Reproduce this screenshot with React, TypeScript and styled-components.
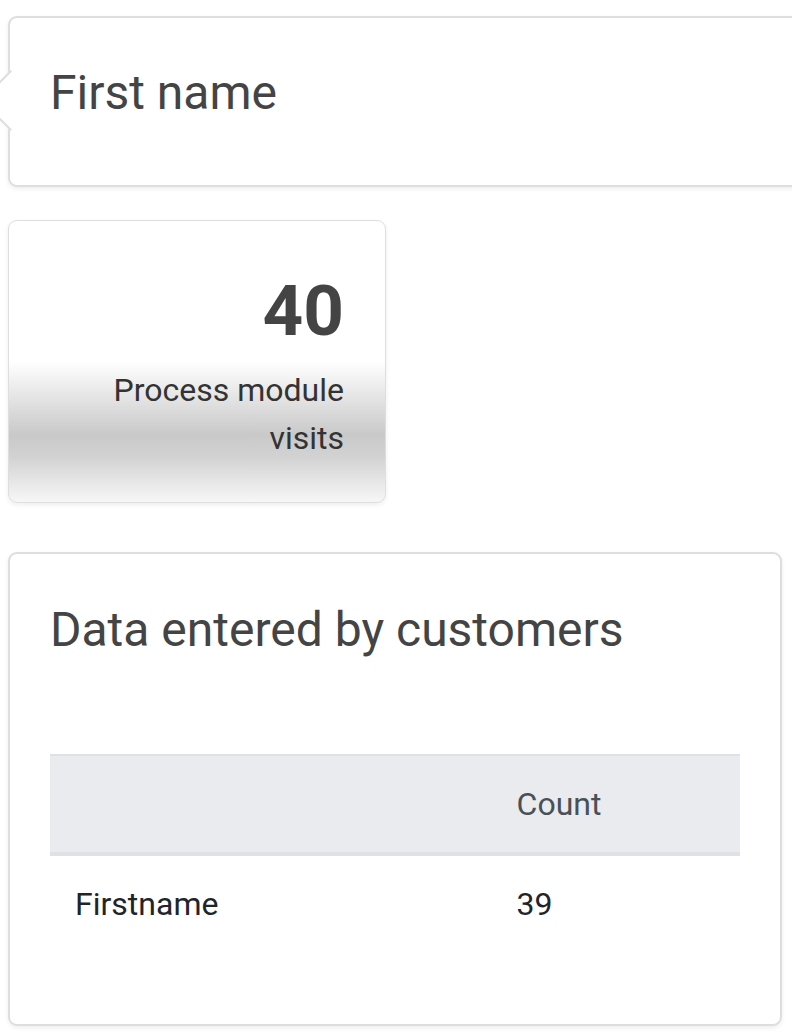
import React from "react";
import styled, { createGlobalStyle } from "styled-components";

const Global = createGlobalStyle`
  html, body { margin: 0; padding: 0; overflow-x: hidden; background: #fff; }
  body { font-family: Roboto, "Noto Sans", "Liberation Sans", sans-serif; color: #444; }
  * { box-sizing: border-box; }
`;

const Page = styled.div`
  display: flex;
  flex-direction: column;
  align-items: flex-start;
  padding: 16px 10px 10px 8px;
`;

const Card = styled.div`
  position: relative;
  background: #fff;
  border: 2px solid #dedede;
  border-radius: 9px;
  box-shadow: 0 2px 5px rgba(0, 0, 0, 0.07);
`;

const LabelCard = styled(Card)`
  align-self: stretch;
  margin-right: -40px;
  padding: 47px 40px 64px;

  &::before {
    content: "";
    position: absolute;
    left: -21.5px;
    top: 60.5px;
    width: 41px;
    height: 41px;
    background: #fff;
    border-left: 2px solid #dedede;
    border-bottom: 2px solid #dedede;
    transform: rotate(45deg);
  }
`;

const LabelText = styled.div`
  position: relative;
  font-size: 48px;
  line-height: 56px;
  color: #444;
`;

const StatCard = styled(Card)`
  margin-top: 33px;
  width: 378px;
  height: 283px;
  border-width: 1.5px;
  padding: 50px 41px 0;
  text-align: right;
  background: linear-gradient(
    to bottom,
    #ffffff 0%,
    #ffffff 50%,
    #c9c9c9 76%,
    #d2d2d2 84%,
    #f7f7f7 100%
  );
`;

const StatValue = styled.div`
  font-size: 71px;
  font-weight: 700;
  line-height: 80px;
  color: #444;
`;

const StatLabel = styled.div`
  margin-top: 15px;
  font-size: 32px;
  line-height: 48px;
  color: #333;
`;

const TableCard = styled(Card)`
  margin-top: 49px;
  align-self: stretch;
  padding: 48px 40px 72px;
`;

const Title = styled.h2`
  margin: 0 0 97px;
  font-size: 48px;
  font-weight: 400;
  line-height: 55px;
  color: #444;
`;

const Table = styled.table`
  width: 100%;
  border-collapse: collapse;
`;

const HeadCell = styled.th<{ $w?: string }>`
  width: ${(p) => p.$w || "auto"};
  text-align: left;
  font-weight: 400;
  font-size: 32px;
  line-height: 46px;
  color: #495057;
  background: #e9ebee;
  padding: 25px 25px;
  border-top: 2px solid #dee2e6;
  border-bottom: 4px solid #dee2e6;
`;

const Cell = styled.td`
  font-size: 32px;
  line-height: 46px;
  color: #212529;
  padding: 25px 25px;
`;

export default function App() {
  return (
    <>
      <Global />
      <Page>
        <LabelCard>
          <LabelText>First name</LabelText>
        </LabelCard>
        <StatCard>
          <StatValue>40</StatValue>
          <StatLabel>
            Process module
            <br />
            visits
          </StatLabel>
        </StatCard>
        <TableCard>
          <Title>Data entered by customers</Title>
          <Table>
            <thead>
              <tr>
                <HeadCell $w="64%"></HeadCell>
                <HeadCell>Count</HeadCell>
              </tr>
            </thead>
            <tbody>
              <tr>
                <Cell>Firstname</Cell>
                <Cell>39</Cell>
              </tr>
            </tbody>
          </Table>
        </TableCard>
      </Page>
    </>
  );
}
